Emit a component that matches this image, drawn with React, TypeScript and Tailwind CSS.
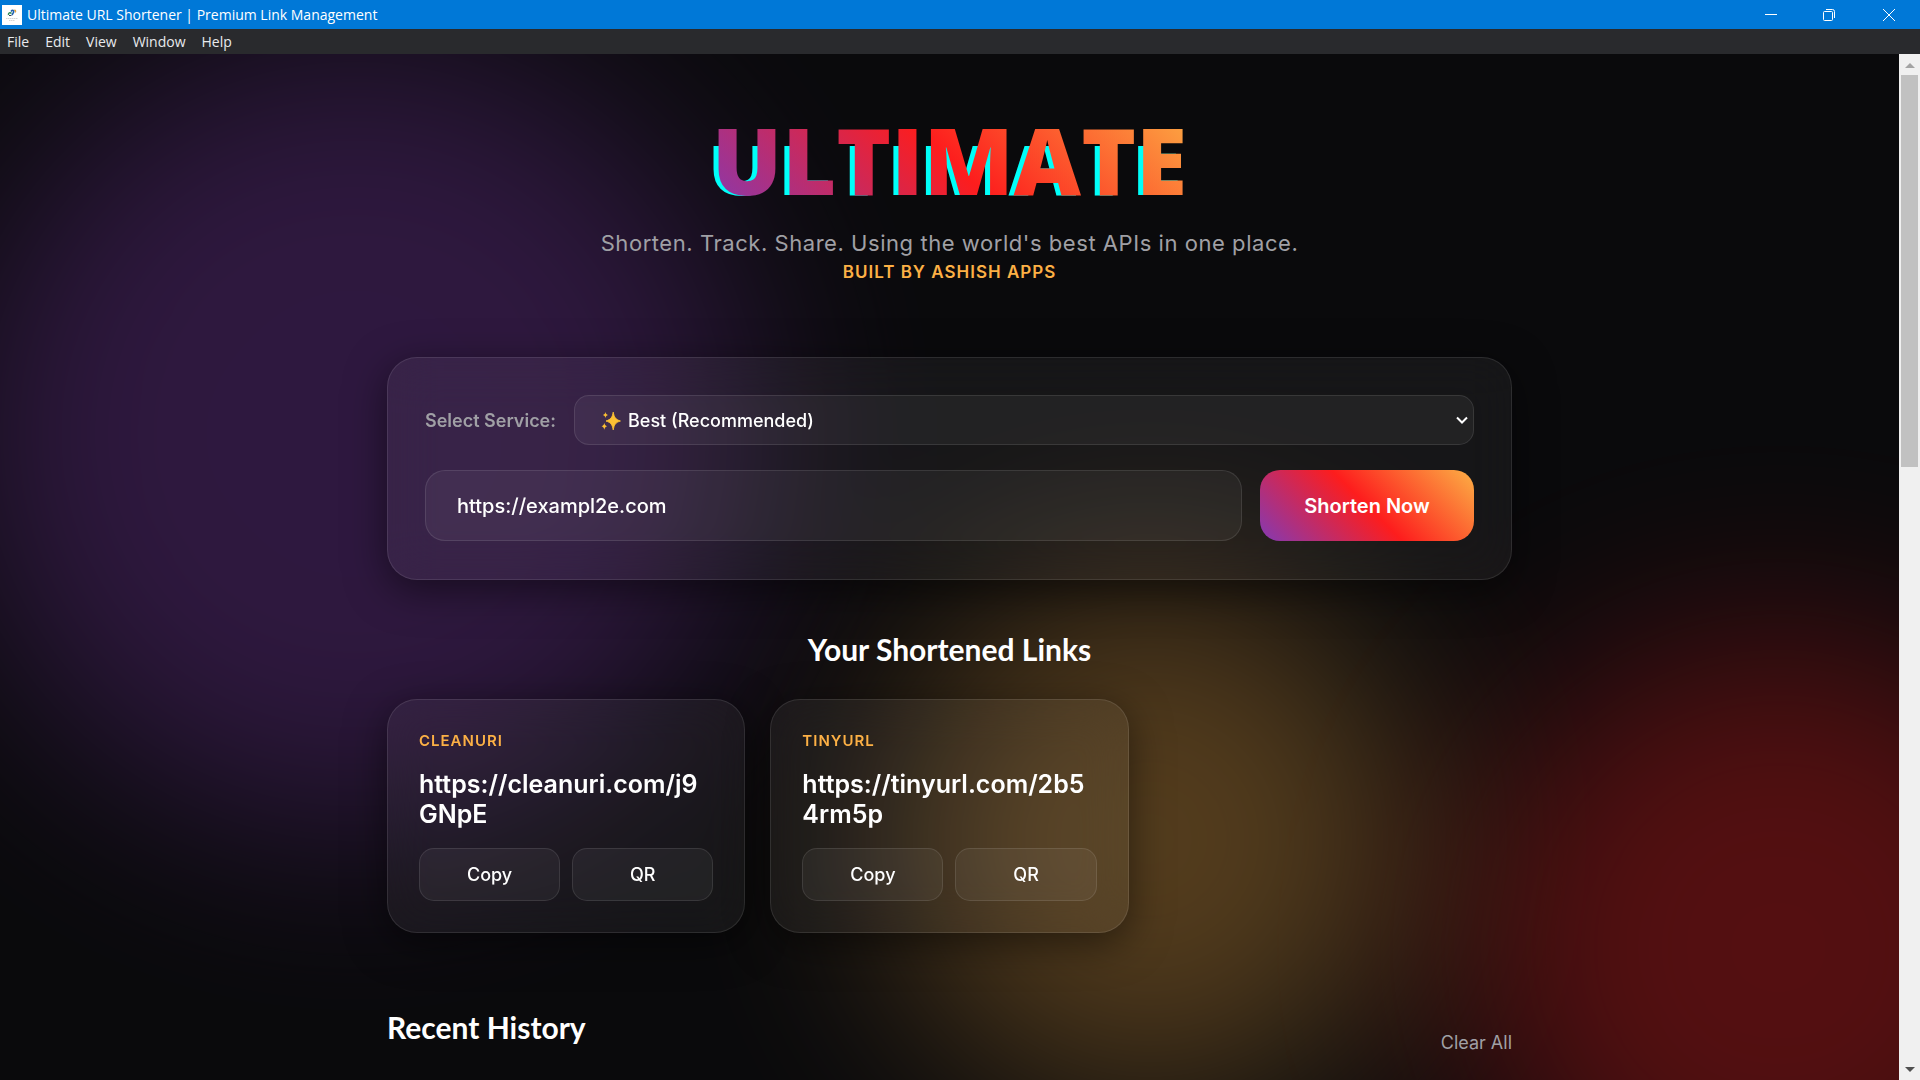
import { useState } from "react";

const menus = ["File", "Edit", "View", "Window", "Help"];

const links = [
  { service: "CLEANURI", url: "https://cleanuri.com/j9GNpE" },
  { service: "TINYURL", url: "https://tinyurl.com/2b54rm5p" },
];

function TitleBar() {
  return (
    <header className="flex h-[29px] shrink-0 items-center bg-[#0078d7] pl-[2px] font-['Open_Sans',sans-serif] text-white">
      <svg viewBox="0 0 20 20" className="size-5 bg-white" fill="none" aria-hidden="true">
        <path d="M6.500 10c-.4-2 1.500-3 3-1.500" stroke="#2b8a57" strokeWidth="1.500" />
        <path d="M9 6.500c1.500-2 3.500-1 2.500 1L10 10" stroke="#1d5fae" strokeWidth="1.500" />
        <path d="M12 5.500c1.500-.8 2.200.5 1.200 2" stroke="#e2a13c" strokeWidth="1.200" />
        <path d="M7 10.500h2.500" stroke="#37475a" strokeWidth="1" />
        <path d="M4 13.500h12M7 15.500h6" stroke="#bbb" strokeWidth=".6" strokeDasharray="1.500 .5" />
      </svg>
      <h1 className="ml-[5px] flex-1 text-sm">Ultimate URL Shortener | Premium Link Management</h1>
      <div className="flex h-full">
        <button aria-label="Minimize" className="flex w-[58px] items-center justify-center">
          <svg width="12" height="12" viewBox="0 0 12 12" stroke="#fff" fill="none"><path d="M0 5.500h12" /></svg>
        </button>
        <button aria-label="Restore" className="flex w-[58px] items-center justify-center">
          <svg width="12" height="12" viewBox="0 0 12 12" stroke="#fff" fill="none">
            <rect x=".5" y="2.500" width="9" height="9" rx="1" />
            <path d="M3 .5h6.500a2 2 0 0 1 2 2V9" />
          </svg>
        </button>
        <button aria-label="Close" className="flex w-[62px] items-center justify-center">
          <svg width="12" height="12" viewBox="0 0 12 12" stroke="#fff" fill="none"><path d="M0 0l12 12M12 0L0 12" /></svg>
        </button>
      </div>
    </header>
  );
}

function MenuBar() {
  return (
    <nav className="flex h-[25px] shrink-0 items-center gap-4 bg-[#292a2d] pl-[7px] font-['Open_Sans',sans-serif] text-sm text-[#e8eaed]">
      {menus.map((m) => (
        <button key={m}>{m}</button>
      ))}
    </nav>
  );
}

function ScrollBar() {
  return (
    <div className="flex w-[21px] shrink-0 flex-col bg-[#f0f0f0]" aria-hidden="true">
      <div className="flex h-[21px] items-center justify-center">
        <svg width="10" height="6" viewBox="0 0 10 6" fill="#a3a3a3"><path d="M5 1l5 5H0z" /></svg>
      </div>
      <div className="mx-[2px] h-[392px] bg-[#c1c1c1]" />
      <div className="mt-auto flex h-[21px] items-center justify-center">
        <svg width="10" height="6" viewBox="0 0 10 6" fill="#505050"><path d="M5 5L0 0h10z" /></svg>
      </div>
    </div>
  );
}

function Sparkles() {
  return (
    <svg viewBox="0 0 18 18" className="pointer-events-none absolute top-4 left-[27px] size-5" fill="#fcc033" aria-hidden="true">
      <path d="M11 1c.9 4.800 2 6.600 6.500 8-4.500 1.400-5.600 3.200-6.500 8-.9-4.800-2-6.600-6.500-8 4.500-1.400 5.600-3.200 6.500-8z" stroke="#fcc033" strokeWidth=".8" />
      <path d="M4 .8c.4 1.700.9 2.200 2.300 2.700C4.900 4 4.400 4.500 4 6.200 3.600 4.500 3.100 4 1.700 3.500 3.100 3 3.600 2.500 4 .8z" />
      <path d="M3 10.500c.4 2 .9 2.600 2.500 3.200-1.600.6-2.100 1.200-2.500 3.200-.4-2-.9-2.600-2.500-3.200 1.600-.6 2.100-1.200 2.500-3.200z" />
    </svg>
  );
}

function LinkCard({ service, url }: { service: string; url: string }) {
  return (
    <article className="rounded-[30px] border border-white/10 bg-white/5 p-[31px] shadow-[0_10px_40px_rgba(0,0,0,0.5)] backdrop-blur-xl">
      <p className="text-[15px] leading-5 font-semibold tracking-[1px] text-[#fcb045]">{service}</p>
      <p className="mt-[18px] text-[25px] leading-[30px] font-semibold break-all">{url}</p>
      <div className="mt-[19px] grid grid-cols-2 gap-3">
        {["Copy", "QR"].map((label) => (
          <button key={label} className="h-[53px] rounded-[15px] border border-white/10 bg-white/5 text-[18px] font-medium">
            {label}
          </button>
        ))}
      </div>
    </article>
  );
}

export default function App() {
  const [url, setUrl] = useState("https://exampl2e.com");

  return (
    <div className="flex h-screen flex-col bg-[#0a0a0c] font-['Inter',sans-serif] text-white">
      <TitleBar />
      <MenuBar />
      <div className="flex min-h-0 flex-1">
        <main className="relative isolate min-w-0 flex-1 overflow-hidden">
          <div className="absolute -top-[15px] -left-[40px] -z-10 size-[790px] rounded-full bg-[#833ab4] opacity-30 blur-[100px]" />
          <div className="absolute -right-[192px] -bottom-[180px] -z-10 size-[625px] rounded-full bg-[#fd1d1d] opacity-30 blur-[100px]" />
          <div className="absolute top-[525px] left-[890px] -z-10 size-[520px] rounded-full bg-[#fcb045] opacity-30 blur-[100px]" />

          <div className="mx-auto max-w-[1125px] pt-[59px]">
            <div className="text-center">
              <h2
                data-text="ULTIMATE"
                className="relative isolate mx-auto w-fit font-['Open_Sans',sans-serif] text-[93px] leading-none font-extrabold before:absolute before:top-0 before:-left-[5px] before:-z-10 before:text-[#00fff9] before:content-[attr(data-text)] before:[clip-path:inset(33px_0_0_0)]"
              >
                <span className="bg-[linear-gradient(45deg,#833ab4,#fd1d1d,#fcb045)] bg-clip-text text-transparent">ULTIMATE</span>
              </h2>
              <p className="mt-[22px] text-[22px] leading-[30px] tracking-wide text-[#a0a0a5]">
                Shorten. Track. Share. Using the world's best APIs in one place.
              </p>
              <p className="text-[17px] leading-[29px] font-semibold tracking-[1px] text-[#fcb045]">BUILT BY ASHISH APPS</p>
            </div>

            <form
              onSubmit={(e) => e.preventDefault()}
              className="mt-[70px] rounded-[30px] border border-white/10 bg-white/5 px-[37px] pt-[37px] pb-[38px] shadow-[0_10px_40px_rgba(0,0,0,0.5)] backdrop-blur-xl"
            >
              <div className="flex items-center gap-[18px]">
                <label htmlFor="service" className="text-[18px] font-semibold text-[#a0a0a5]">Select Service:</label>
                <div className="relative flex-1">
                  <select
                    id="service"
                    className="h-[50px] w-full appearance-none rounded-[15px] border border-white/10 bg-white/5 pl-[53px] text-[18px] font-medium text-white"
                  >
                    <option>Best (Recommended)</option>
                  </select>
                  <Sparkles />
                  <svg className="pointer-events-none absolute top-5 right-[6px]" width="12" height="10" viewBox="0 0 12 10" fill="none" stroke="#fff" strokeWidth="2" aria-hidden="true">
                    <path d="M1 2.500l5 5 5-5" />
                  </svg>
                </div>
              </div>
              <div className="mt-[25px] flex gap-[18px]">
                <input
                  type="text"
                  aria-label="Long URL"
                  value={url}
                  onChange={(e) => setUrl(e.target.value)}
                  className="h-[71px] min-w-0 flex-1 rounded-[20px] border border-white/10 bg-white/5 px-[31px] text-[20px] font-medium"
                />
                <button className="w-[214px] rounded-[20px] bg-[linear-gradient(45deg,#833ab4,#fd1d1d,#fcb045)] text-[20px] font-semibold">
                  Shorten Now
                </button>
              </div>
            </form>

            <section>
              <h3 className="mt-[49px] text-center font-['Lato',sans-serif] text-[30px] leading-10 font-bold">Your Shortened Links</h3>
              <div className="mt-[30px] grid grid-cols-3 gap-[25px]">
                {links.map((l) => (
                  <LinkCard key={l.service} {...l} />
                ))}
              </div>
            </section>

            <section className="mt-[74px] flex items-end justify-between">
              <h3 className="pb-2 font-['Lato',sans-serif] text-[30px] leading-10 font-bold">Recent History</h3>
              <button className="text-[18px] leading-6 text-[#a0a0a5]">Clear All</button>
            </section>
          </div>
        </main>
        <ScrollBar />
      </div>
    </div>
  );
}
